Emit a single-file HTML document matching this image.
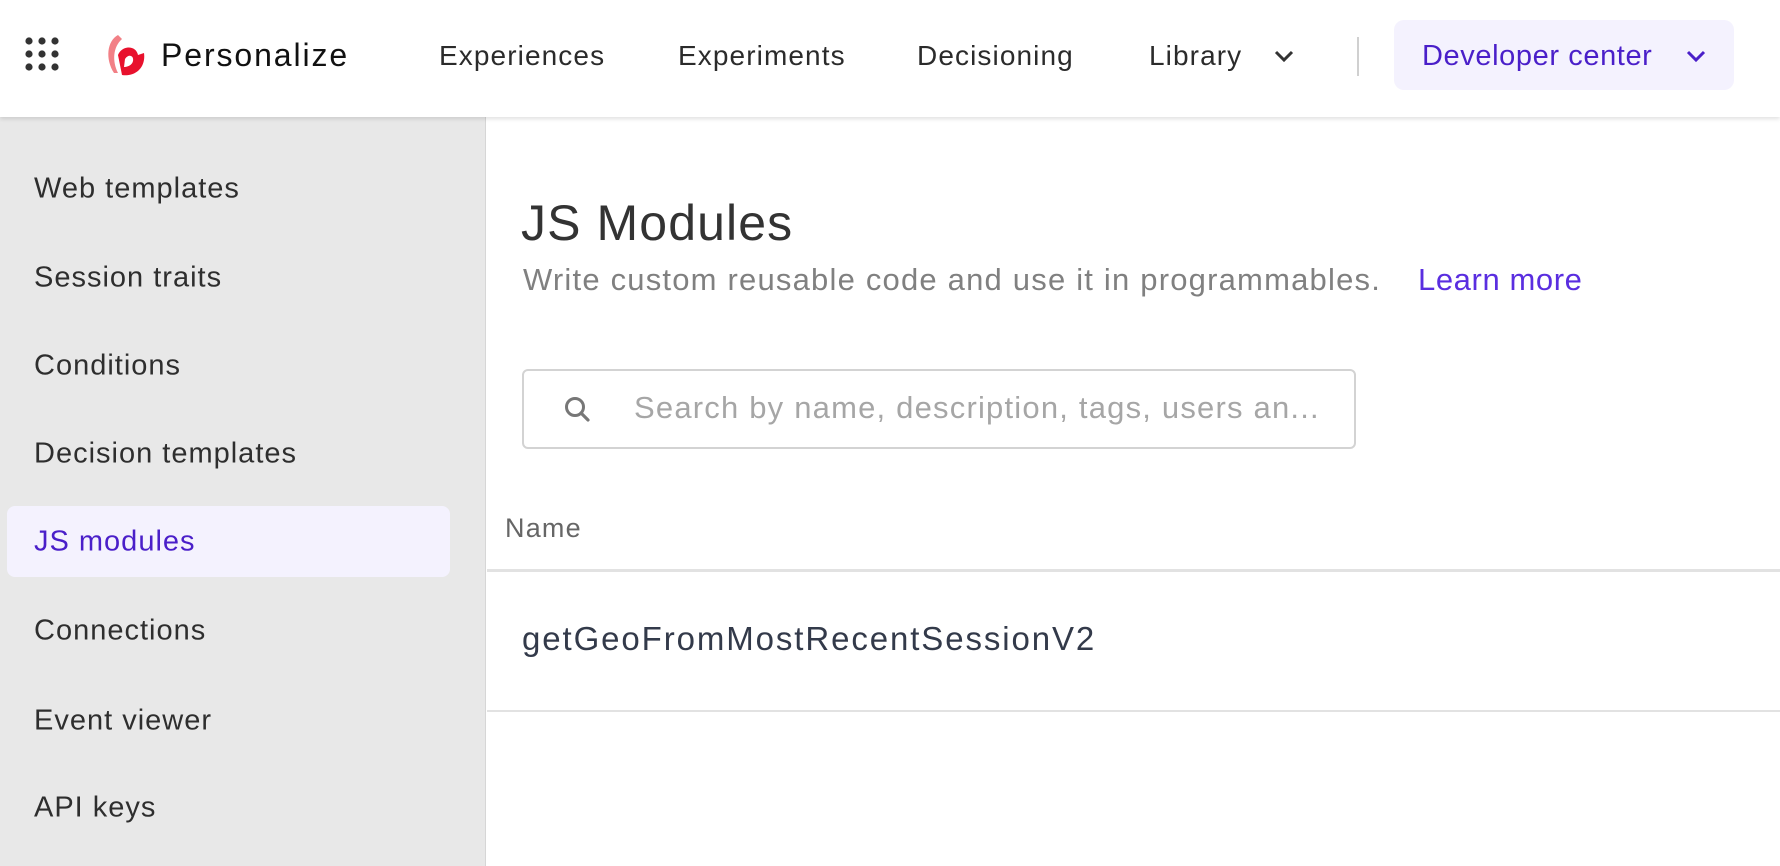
<!DOCTYPE html>
<html><head><meta charset="utf-8"><style>
*{margin:0;padding:0;box-sizing:border-box}
body{width:1780px;height:866px;overflow:hidden;background:#fff;font-family:"Liberation Sans",sans-serif;position:relative;color:#333}
.a{position:absolute;white-space:nowrap}
.hdr{position:absolute;left:0;top:0;width:1780px;height:117px;background:#fff;box-shadow:0 2px 4px rgba(0,0,0,.12);z-index:2}
.nav{font-size:28px;letter-spacing:1.1px;color:#2b2b2b;top:40px}
.side{position:absolute;left:0;top:117px;width:486px;height:749px;background:#e8e8e8;border-right:1px solid #d6d6d6}
.si{position:absolute;left:34px;font-size:29px;letter-spacing:1px;color:#2e2e2e;transform:translateY(-50%)}
</style></head><body>
<div class="hdr">
  <svg class="a" style="left:25px;top:37px" width="34" height="34" viewBox="0 0 34 34" fill="#333">
    <circle cx="4" cy="4" r="3.6"/><circle cx="17" cy="4" r="3.6"/><circle cx="30" cy="4" r="3.6"/>
    <circle cx="4" cy="17" r="3.6"/><circle cx="17" cy="17" r="3.6"/><circle cx="30" cy="17" r="3.6"/>
    <circle cx="4" cy="30" r="3.6"/><circle cx="17" cy="30" r="3.6"/><circle cx="30" cy="30" r="3.6"/>
  </svg>
  <svg class="a" style="left:104px;top:33px" width="44" height="48" viewBox="0 0 44 48">
    <path d="M14 2 C3 8 1 26 10 40 L14 40 C8 28 9 14 18 6 Z" fill="#f28086"/>
    <path d="M14 22 C18 12 32 12 34 22 L40 20 C42 34 32 44 18 42 Z" fill="#e8112d"/>
    <path d="M21 26 C24 21 30 22 29 28 C28 33 22 34 20 34 Z" fill="#fff"/>
  </svg>
  <div class="a" style="left:161px;top:37px;font-size:32px;letter-spacing:1.9px;color:#111">Personalize</div>
  <div class="a nav" style="left:439px">Experiences</div>
  <div class="a nav" style="left:678px">Experiments</div>
  <div class="a nav" style="left:917px">Decisioning</div>
  <div class="a nav" style="left:1149px">Library</div>
  <svg class="a" style="left:1273px;top:49px" width="22" height="14" viewBox="0 0 22 14"><path d="M3 3 L11 11 L19 3" stroke="#333" stroke-width="3" fill="none"/></svg>
  <div class="a" style="left:1357px;top:37px;width:2px;height:39px;background:#d0d0d0"></div>
  <div class="a" style="left:1394px;top:20px;width:340px;height:70px;background:#f4f2fe;border-radius:10px"></div>
  <div class="a" style="left:1422px;top:40px;font-size:29px;letter-spacing:0.6px;color:#4a1fc9">Developer center</div>
  <svg class="a" style="left:1685px;top:49px" width="22" height="14" viewBox="0 0 22 14"><path d="M3 3 L11 11 L19 3" stroke="#4a1fc9" stroke-width="3" fill="none"/></svg>
</div>
<div class="side">
  <div class="a" style="left:7px;top:389px;width:443px;height:71px;background:#f4f2fe;border-radius:8px"></div>
  <div class="si" style="top:72px">Web templates</div>
  <div class="si" style="top:161px">Session traits</div>
  <div class="si" style="top:249px">Conditions</div>
  <div class="si" style="top:337px">Decision templates</div>
  <div class="si" style="top:425px;color:#4a1fc9">JS modules</div>
  <div class="si" style="top:514px">Connections</div>
  <div class="si" style="top:604px">Event viewer</div>
  <div class="si" style="top:691px">API keys</div>
</div>
<div class="a" style="left:521px;top:194px;font-size:50px;letter-spacing:1.1px;color:#333">JS Modules</div>
<div class="a" style="left:523px;top:262px;font-size:31px;letter-spacing:1.2px;color:#808080">Write custom reusable code and use it in programmables.</div>
<div class="a" style="left:1418px;top:262px;font-size:31px;letter-spacing:0.6px;color:#5a2ee0">Learn more</div>
<div class="a" style="left:522px;top:369px;width:834px;height:80px;border:2px solid #d3d3d3;border-radius:6px"></div>
<svg class="a" style="left:563px;top:395px" width="30" height="30" viewBox="0 0 30 30"><circle cx="12" cy="12" r="8.5" stroke="#777" stroke-width="3" fill="none"/><path d="M18 18 L25 25" stroke="#777" stroke-width="3.2" stroke-linecap="round"/></svg>
<div class="a" style="left:634px;top:390px;font-size:31px;letter-spacing:1.2px;color:#a6a6a6">Search by name, description, tags, users an...</div>
<div class="a" style="left:505px;top:513px;font-size:27px;letter-spacing:1.2px;color:#666">Name</div>
<div class="a" style="left:487px;top:569px;width:1293px;height:3px;background:#e2e2e2"></div>
<div class="a" style="left:522px;top:620px;font-size:33px;letter-spacing:1.9px;color:#333a4a">getGeoFromMostRecentSessionV2</div>
<div class="a" style="left:487px;top:710px;width:1293px;height:2px;background:#e2e2e2"></div>
</body></html>
